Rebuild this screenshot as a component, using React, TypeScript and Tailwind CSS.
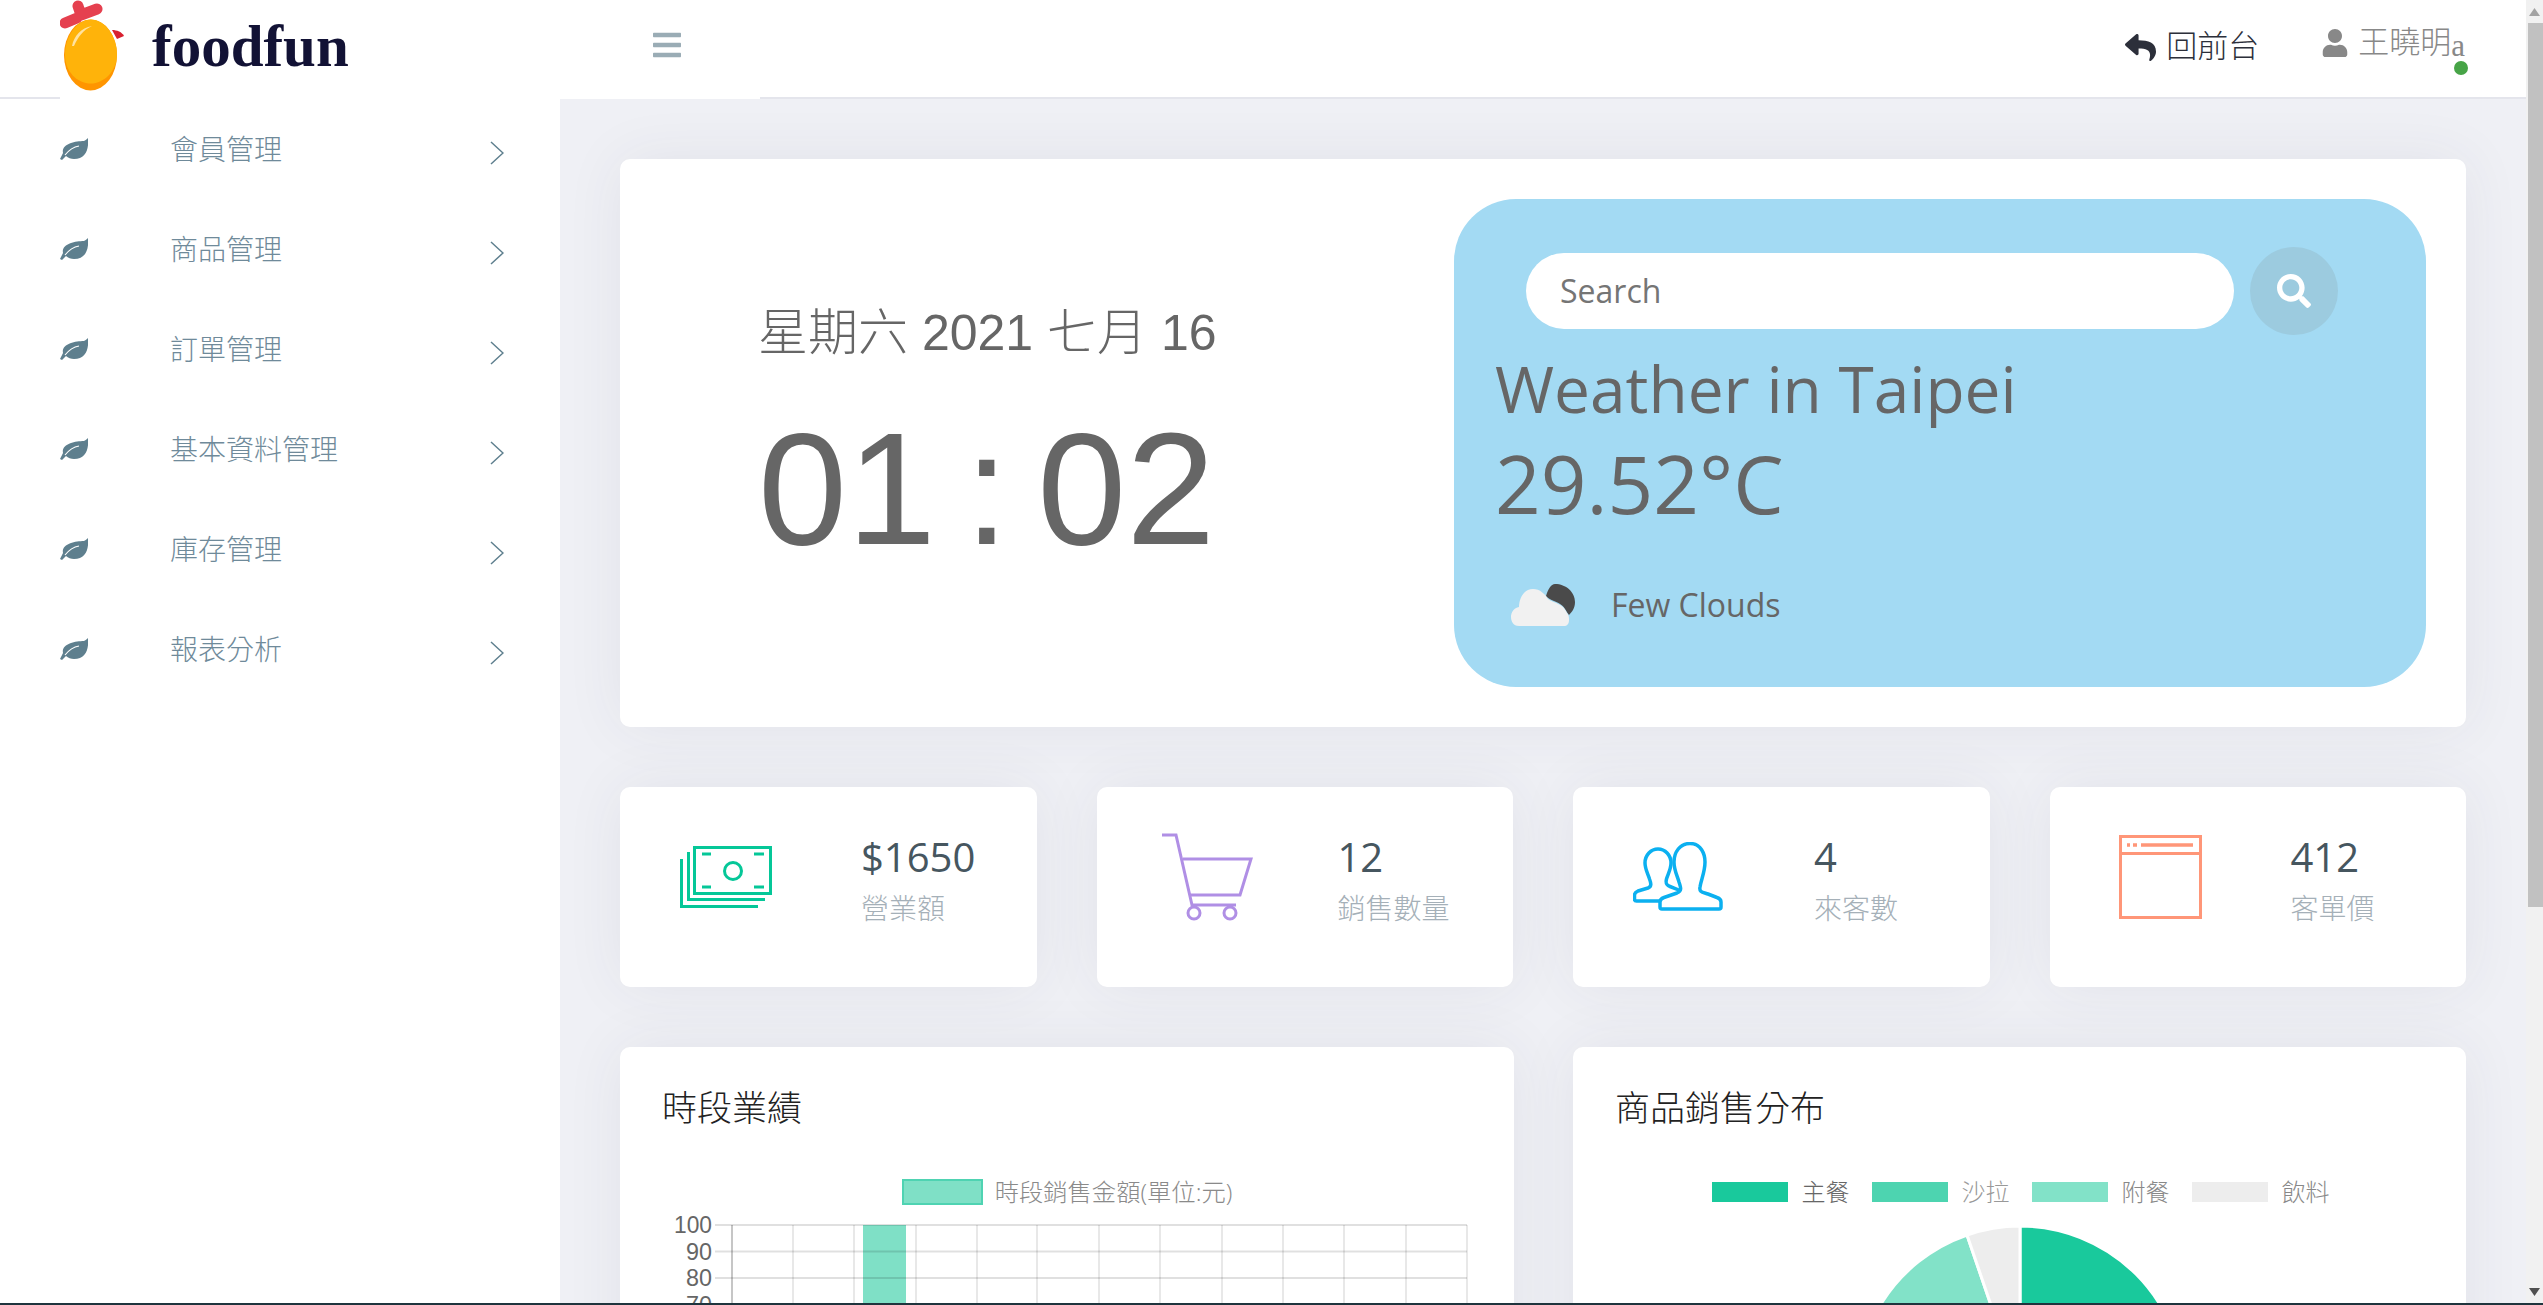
import type { ReactNode } from "react";
import { FaBars, FaReply, FaSearch, FaUser } from "react-icons/fa";

const menu = ["會員管理", "商品管理", "訂單管理", "基本資料管理", "庫存管理", "報表分析"];
const pieLegend = [
  { label: "主餐", swatch: "bg-[#19c99c]", text: "text-[#666666]" },
  { label: "沙拉", swatch: "bg-[#4dd4b0]", text: "text-[#999999]" },
  { label: "附餐", swatch: "bg-[#82e2c8]", text: "text-[#888888]" },
  { label: "飲料", swatch: "bg-[#ededed]", text: "text-[#888888]" },
];

function Logo() {
  return (
    <svg width="66" height="92" viewBox="0 0 66 92" className="shrink-0">
      <path d="M5 23L17 18M18 6L21 15L37 9" fill="none" stroke="#e5404f" strokeWidth="11" strokeLinecap="round" strokeLinejoin="round" />
      <path d="M52 30c5 0 10 2 12 6l-7 3z" fill="#d8202f" />
      <ellipse cx="30.500" cy="55" rx="26.500" ry="35.500" fill="#ff9500" />
      <path d="M31 19.500c14 0 26 17 26 35 0 14-10 27-24 29-16 1-28-12-28-29 0-18 12-35 26-35z" fill="#ffb30a" />
      <path d="M12 46c2-10 9-18 20-20-9 4-14 11-18 20z" fill="#ffe2a0" />
    </svg>
  );
}

function Leaf() {
  return (
    <svg width="28" height="22" viewBox="0 0 28 22" className="shrink-0">
      <path d="M28 0c1 11-2 21-14 21-3 0-6-1-8-3l-4 4-2-1 3-6C1 6 15 3 24 3c2-1 3-2 4-3z" fill="#5e7f8e" />
      <path d="M5 17c4-5 8-8 14-9" fill="none" stroke="#fff" strokeWidth="1.200" />
    </svg>
  );
}

function MoneyIcon() {
  return (
    <svg width="92" height="62" viewBox="0 0 92 62" fill="none" stroke="#05c798" strokeWidth="3">
      <rect x="14.500" y="1.500" width="76" height="46" />
      <path d="M8.500 6v47.500H85M1.500 13v47.500H78" />
      <circle cx="53" cy="25" r="8.500" />
      <path d="M22 8h9M74 8h10M22 41h9M74 41h10" />
    </svg>
  );
}

function CartIcon() {
  return (
    <svg width="91" height="88" viewBox="0 0 91 88" fill="none" stroke="#b08fe5" strokeWidth="3">
      <path d="M0 2h14l16 70h44" />
      <path d="M21 26h68l-11 36H28" />
      <circle cx="32" cy="80" r="6" />
      <circle cx="68" cy="80" r="6" />
    </svg>
  );
}

function UsersIcon() {
  return (
    <svg width="90" height="70" viewBox="0 0 90 70" fill="none" stroke="#0bb0f0" strokeWidth="3.500" strokeLinejoin="round">
      <path d="M57 1.500c11 0 15 10.500 15 18.500 0 10-4 18-5 25-1 5 2 5 8 7l9 3.500c3 1 4 2.500 4 4.500v5c0 1.500-1 2-2 2H29c-1 0-2-.5-2-2v-5c0-2 1-3.500 4-4.500l13-4.500c5-2 4-5 2-11-2-7-5-12-5-20 0-10 6-18.500 16-18.500z" />
      <path d="M27 59H3.500C2 59 1.500 58 1.500 57v-4c0-2 1.500-3 3.500-4l10-3c4-1.500 3-5 1.500-9C15 32 12 27 12 21c0-8 6-14 13-14s13 6 13 14c0 6-3 11-4.500 16-1 4-.5 6 3.500 7.500l10 4" />
    </svg>
  );
}

function WindowIcon() {
  return (
    <svg width="83" height="84" viewBox="0 0 83 84" fill="none" stroke="#ff9678" strokeWidth="3">
      <rect x="1.500" y="1.500" width="80" height="81" />
      <path d="M1 18.500h81" />
      <path d="M8 10h3M14 10h4M22 10h52" strokeWidth="3.500" />
    </svg>
  );
}

function CloudIcon() {
  return (
    <svg width="64" height="42" viewBox="0 0 64 42" className="shrink-0">
      <path d="M44 0c11 0 20 8 20 18 0 6-3 10-6 13-3-4-5-9-9-11-4-3-9-3-14-8 2-7 5-12 9-12z" fill="#4a4a4a" />
      <path d="M8 42C2 42 0 37 0 33c0-5 3-9 8-10 0-9 5-18 14-18 7 0 12 5 15 10 4 3 7 3 10 5 5 2 7 5 9 9 2 2 2 5 2 7 0 4-2 6-5 6z" fill="#f1f1f1" />
    </svg>
  );
}

function BarChart() {
  const rows = [10, 36.5, 63, 89.5];
  const cols = [173, 234, 296, 357, 417, 479, 540, 602, 663, 724, 786, 847];
  const labels = ["100", "90", "80", "70"];
  return (
    <svg width="893" height="92" viewBox="0 0 893 92" className="block overflow-visible" fontFamily="'Liberation Sans', sans-serif">
      <rect x="243" y="10" width="43" height="82" fill="#7fe0c6" />
      {rows.map((y, i) => (
        <g key={y}>
          <line x1="95" x2="847" y1={y} y2={y} stroke="#000" strokeOpacity="0.12" strokeWidth="2" />
          <text x="92" y={y + 8} textAnchor="end" fontSize="24" fill="#666666" textLength={i === 0 ? 38 : 26} lengthAdjust="spacingAndGlyphs">
            {labels[i]}
          </text>
        </g>
      ))}
      <line x1="112" x2="112" y1="10" y2="92" stroke="#000" strokeOpacity="0.3" strokeWidth="1.500" />
      {cols.map((x) => (
        <line key={x} x1={x} x2={x} y1="10" y2="92" stroke="#000" strokeOpacity="0.12" strokeWidth="1.500" />
      ))}
    </svg>
  );
}

function PieChart() {
  return (
    <svg width="893" height="80" viewBox="0 0 893 80" className="block">
      <g transform="translate(447 164)" stroke="#fff" strokeWidth="3">
        <path d="M0 0V-164A164 164 0 0 1 0 164z" fill="#19c99c" />
        <path d="M0 0V164A164 164 0 0 1 -53-155z" fill="#82e2c8" />
        <path d="M0 0L-53-155A164 164 0 0 1 0-164z" fill="#ededed" />
      </g>
    </svg>
  );
}

function StatCard({ icon, offset, value, label }: { icon: ReactNode; offset: string; value: string; label: string }) {
  return (
    <div className="h-[200px] rounded-[10px] bg-white shadow-[0_0_60px_rgba(50,55,90,0.07)] flex items-center">
      <div className={`w-[241px] shrink-0 pb-[20px] flex ${offset}`}>{icon}</div>
      <div className="mt-[-13px]">
        <div className="text-[40px] leading-[44px] mb-[11px] text-[#46565f]">{value}</div>
        <div className="text-[28px] leading-[36px] text-[#a5b0b8] font-light">{label}</div>
      </div>
    </div>
  );
}

export default function App() {
  return (
    <div className="h-screen overflow-hidden flex flex-col bg-white font-['Open_Sans','Noto_Sans_CJK_TC',sans-serif]">
      <div className="flex-1 min-h-0 flex">
        <div className="flex-1 min-w-0 flex flex-col">
          <header className="h-[99px] shrink-0 flex bg-white">
            <div className="w-[60px] border-b-2 border-[#e4e5ec]" />
            <div className="w-[700px] flex">
              <Logo />
              <span className="ml-[26px] mt-[14px] text-[59px] leading-[64px] font-bold text-[#121235] font-['Liberation_Serif',serif]">foodfun</span>
              <FaBars className="ml-auto mr-[77px] mt-[29px] text-[#9aacb5]" size={32} />
            </div>
            <div className="flex-1 border-b-2 border-[#e4e5ec] flex items-start justify-end pr-[61px] font-['Liberation_Sans','Noto_Sans_CJK_TC',sans-serif]">
              <div className="flex items-center mt-[27px] text-[31px] leading-[40px] font-light text-[#2c2f3a]">
                <FaReply size={31} className="mr-[10px]" />
                回前台
              </div>
              <div className="relative flex items-center ml-[62px] mt-[18px] text-[31px] leading-[44px] font-light text-[#888888]">
                <FaUser size={28} className="mr-[9px]" />
                王曉明
                <span className="font-['Liberation_Serif',serif] font-normal mt-[6px]">a</span>
                <span className="absolute right-[-3px] top-[43px] w-[14px] h-[14px] rounded-full bg-[#47a447]" />
              </div>
            </div>
          </header>

          <div className="flex-1 min-h-0 flex">
            <aside className="w-[560px] shrink-0 bg-white">
              {menu.map((item) => (
                <div key={item} className="h-[100px] flex items-center pl-[60px] pr-[56px]">
                  <Leaf />
                  <span className="ml-[82px] text-[28px] font-light text-[#6f8a9a]">{item}</span>
                  <svg width="14" height="24" viewBox="0 0 14 24" className="ml-auto mt-[8px]" fill="none" stroke="#5e7f8e" strokeWidth="1.500">
                    <path d="M1 1l12 11L1 23" />
                  </svg>
                </div>
              ))}
            </aside>

            <main className="flex-1 min-w-0 overflow-hidden bg-[#eff0f5] pl-[60px] pr-[60px] pt-[60px]">
              <section className="h-[568px] rounded-[10px] bg-white shadow-[0_0_60px_rgba(50,55,90,0.07)] flex items-center pr-[40px]">
                <div className="flex-1 pl-[138px] pb-[3px] text-[#666666] font-['Liberation_Sans','Noto_Sans_CJK_TC',sans-serif]">
                  <div className="text-[50px] leading-[60px] font-light">星期六 2021 七月 16</div>
                  <div className="mt-[34px] text-[160px] leading-[184px] [word-spacing:-16px]">01 : 02</div>
                </div>
                <div className="w-[972px] h-[488px] rounded-[62px] bg-[#a3daf3] pt-[48px] text-[#666666]">
                  <div className="flex items-center pl-[72px] gap-[16px]">
                    <div className="w-[708px] h-[76px] rounded-full bg-white pl-[34px] flex items-center text-[32px] text-[#757575]">Search</div>
                    <div className="w-[88px] h-[88px] rounded-full bg-[#9ccbdf] flex items-center justify-center text-white">
                      <FaSearch size={34} />
                    </div>
                  </div>
                  <div className="pl-[41px]">
                    <div className="mt-[10px] text-[64px] leading-[88px]">Weather in Taipei</div>
                    <div className="text-[80px] leading-[100px]">29.52°C</div>
                    <div className="mt-[48px] ml-[16px] flex items-center gap-[36px] text-[32px]">
                      <CloudIcon />
                      Few Clouds
                    </div>
                  </div>
                </div>
              </section>

              <div className="mt-[60px] grid grid-cols-4 gap-[60px]">
                <StatCard icon={<MoneyIcon />} offset="pl-[60px]" value="$1650" label="營業額" />
                <StatCard icon={<CartIcon />} offset="pl-[65px]" value="12" label="銷售數量" />
                <StatCard icon={<UsersIcon />} offset="pl-[60px]" value="4" label="來客數" />
                <StatCard icon={<WindowIcon />} offset="pl-[69px]" value="412" label="客單價" />
              </div>

              <div className="mt-[60px] grid grid-cols-[894px_893px] gap-[59px]">
                <div className="h-[400px] rounded-[10px] bg-white shadow-[0_0_60px_rgba(50,55,90,0.07)]">
                  <h3 className="pt-[38px] pl-[42px] text-[35px] leading-[46px] font-light text-[#222222]">時段業績</h3>
                  <div className="mt-[48px] h-[26px] flex items-center justify-center gap-[12px] text-[24.300px] text-[#8a8a8a] font-light">
                    <span className="w-[81px] h-[26px] bg-[#7fe0c6] border-2 border-[#4fd3b2]" />
                    時段銷售金額(單位:元)
                  </div>
                  <div className="mt-[10px]">
                    <BarChart />
                  </div>
                </div>
                <div className="h-[400px] rounded-[10px] bg-white shadow-[0_0_60px_rgba(50,55,90,0.07)]">
                  <h3 className="pt-[38px] pl-[42px] text-[35px] leading-[46px] font-light text-[#222222]">商品銷售分布</h3>
                  <div className="mt-[48px] h-[26px] pl-[2px] flex items-center justify-center gap-[22px] text-[24px] font-light">
                    {pieLegend.map((p) => (
                      <div key={p.label} className={`flex items-center gap-[14px] ${p.text}`}>
                        <span className={`w-[76px] h-[20px] ${p.swatch}`} />
                        {p.label}
                      </div>
                    ))}
                  </div>
                  <div className="mt-[21px]">
                    <PieChart />
                  </div>
                </div>
              </div>
            </main>
          </div>
        </div>

        <div className="w-[17px] shrink-0 bg-[#f1f1f1] flex flex-col">
          <div className="h-[23px] flex items-center justify-center">
            <svg width="11" height="8" viewBox="0 0 11 8"><path d="M5.500 0L11 8H0z" fill="#a3a3a3" /></svg>
          </div>
          <div className="h-[884px] ml-[2px] bg-[#c1c1c1]" />
          <div className="mt-auto h-[23px] flex items-center justify-center">
            <svg width="11" height="8" viewBox="0 0 11 8"><path d="M0 0h11L5.500 8z" fill="#505050" /></svg>
          </div>
        </div>
      </div>
      <div className="h-[2px] shrink-0 bg-[#1f343d]" />
    </div>
  );
}
